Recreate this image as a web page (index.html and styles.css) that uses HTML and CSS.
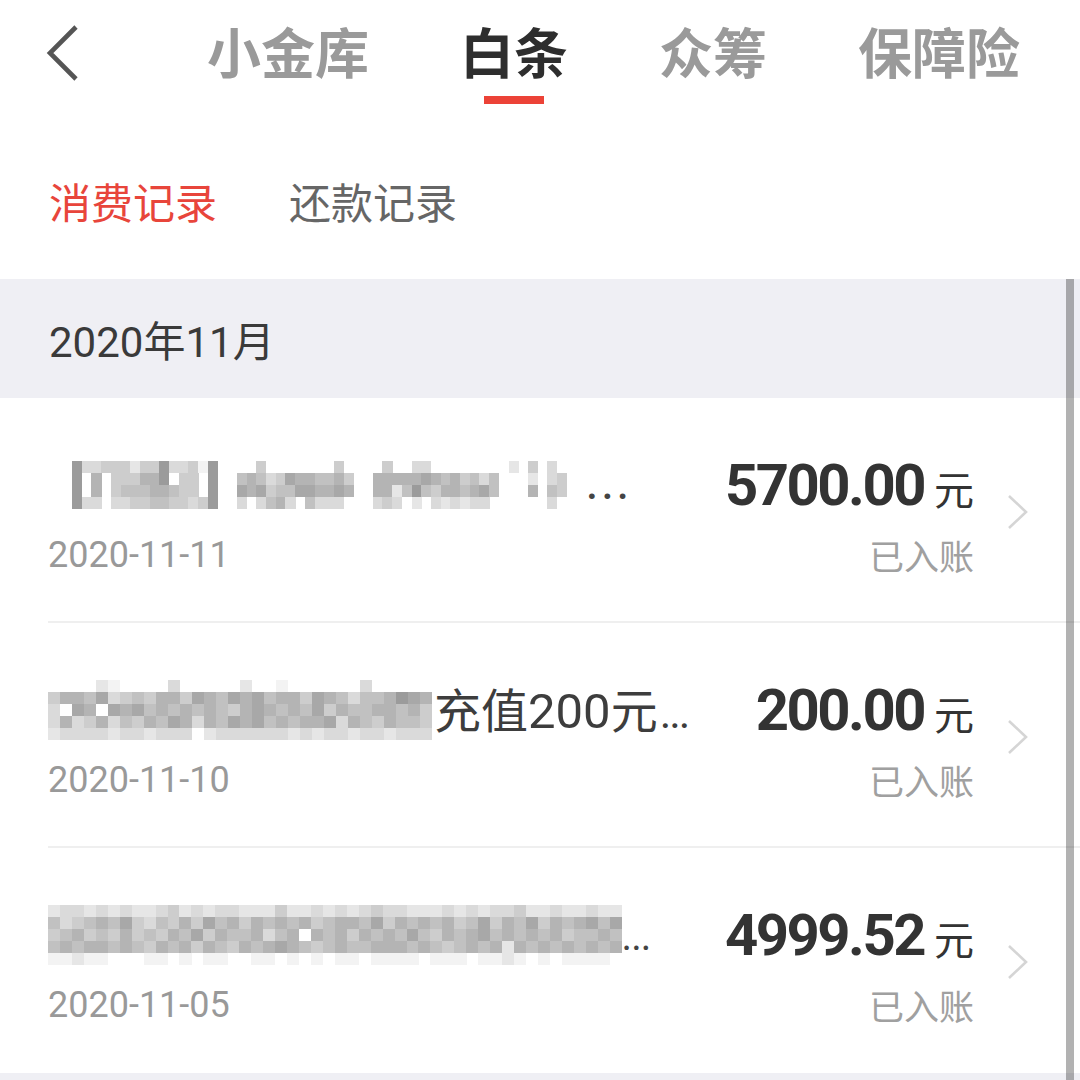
FILE: index.html
```html
<!DOCTYPE html>
<html lang="zh-CN">
<head>
<meta charset="utf-8">
<title>白条 消费记录</title>
<link rel="stylesheet" href="styles.css">
</head>
<body>
<div class="page">
  <header class="topbar">
    <svg class="back" width="36" height="58" viewBox="0 0 36 58"><path d="M31 3 L5 29 L31 55" fill="none" stroke="#555" stroke-width="4.6" stroke-linecap="butt" stroke-linejoin="miter"/></svg>
    <nav class="tabs">
      <div class="tab">小金库</div>
      <div class="tab active">白条<span class="bar"></span></div>
      <div class="tab">众筹</div>
      <div class="tab">保障险</div>
    </nav>
  </header>

  <div class="subtabs">
    <div class="subtab active">消费记录</div>
    <div class="subtab">还款记录</div>
  </div>

  <section class="list">
    <div class="month">2020年11月</div>

    <div class="row">
      <div class="left">
        <div class="title">
          <span class="mosaic m1" data-cw="9.7" data-ch="12" data-rows="833444244833418000040000000400004003300000000204030|806044466804408005653476655640066666765645350002034|806045556654408007674557766760066258546656750006054|833033445544348003035630533300034302032323300000030"></span>
          <span class="ell ell1">...</span>
        </div>
        <div class="date">2020-11-11</div>
      </div>
      <div class="right">
        <div class="amount"><span class="num">5700.00</span><span class="yuan">元</span></div>
        <div class="status">已入账</div>
      </div>
      <svg class="chev" width="22" height="36" viewBox="0 0 22 36"><path d="M2 2 L19 18 L2 34" fill="none" stroke="#d5d5d5" stroke-width="2.6"/></svg>
    </div>

    <div class="row">
      <div class="left">
        <div class="title">
          <span class="mosaic" data-cw="12" data-ch="12" data-rows="00002100003000002001000000300000|46657345466476576756647653556876|30760767565656546765657465566564|36346354657636576756566736546554|23333233233302333333232332332333"></span>
          <span class="txt">充值<span class="d">200</span>元<span class="d dots">...</span></span>
        </div>
        <div class="date">2020-11-10</div>
      </div>
      <div class="right">
        <div class="amount"><span class="num">200.00</span><span class="yuan">元</span></div>
        <div class="status">已入账</div>
      </div>
      <svg class="chev" width="22" height="36" viewBox="0 0 22 36"><path d="M2 2 L19 18 L2 34" fill="none" stroke="#d5d5d5" stroke-width="2.6"/></svg>
    </div>

    <div class="row last">
      <div class="left">
        <div class="title">
          <span class="mosaic" data-cw="11.95" data-ch="12" data-rows="233232322342323322242232323433222323233422322322|534565743546475646565645665746565645746574656757|456454645465746556356065646565754656756565645565|565665654656465465676545655666565456562656565656|112110001101011001101010110111101110112101011110"></span>
          <span class="ell">...</span>
        </div>
        <div class="date">2020-11-05</div>
      </div>
      <div class="right">
        <div class="amount"><span class="num">4999.52</span><span class="yuan">元</span></div>
        <div class="status">已入账</div>
      </div>
      <svg class="chev" width="22" height="36" viewBox="0 0 22 36"><path d="M2 2 L19 18 L2 34" fill="none" stroke="#d5d5d5" stroke-width="2.6"/></svg>
    </div>

    <div class="foot"></div>
    <div class="scrollbar"></div>
  </section>
</div>
<script src="script.js"></script>
</body>
</html>
```

FILE: styles.css
```css
html, body {
  margin: 0;
  padding: 0;
  background: #fff;
  overflow: hidden;
}
body {
  font-family: Roboto, "Noto Sans CJK SC", sans-serif;
  color: #333;
}
.page {
  width: 1080px;
  height: 1080px;
  overflow: hidden;
}

/* top bar */
.topbar {
  display: flex;
  align-items: flex-start;
  padding: 21px 0 0 45px;
}
.back {
  display: block;
  margin-top: 3px;
  flex: none;
}
.tabs {
  display: flex;
  gap: 91px;
  margin-left: 126px;
}
.tab {
  display: flex;
  flex-direction: column;
  align-items: center;
  font-family: "Noto Sans CJK SC", sans-serif;
  font-weight: 700;
  font-size: 54px;
  line-height: 60px;
  color: #9a9a9a;
}
.tab.active {
  color: #2e2e2e;
}
.bar {
  display: block;
  width: 60px;
  height: 8px;
  margin-top: 15px;
  background: #ec4237;
}

/* sub tabs */
.subtabs {
  display: flex;
  gap: 72px;
  padding: 72px 0 53px 49px;
}
.subtab {
  font-family: "Noto Sans CJK SC", sans-serif;
  font-size: 42px;
  line-height: 50px;
  color: #666;
}
.subtab.active {
  color: #e8453b;
}

/* list */
.list {
  position: relative;
}
.month {
  height: 119px;
  display: flex;
  align-items: center;
  padding-left: 49px;
  background: #efeff4;
  font-size: 42px;
  color: #3a3a3a;
}
.row {
  display: flex;
  align-items: center;
  margin-left: 48px;
  padding: 57px 51px 44px 0;
  border-bottom: 2px solid #efefef;
}
.row.last {
  border-bottom: 0;
  padding-bottom: 46px;
}
.left {
  flex: 1;
  min-width: 0;
  display: flex;
  flex-direction: column;
  gap: 18px;
}
.title {
  height: 60px;
  display: flex;
  align-items: center;
  font-size: 42px;
  color: #333;
  white-space: nowrap;
}
.mosaic {
  display: block;
  flex: none;
}
.mosaic svg {
  display: block;
}
.m1 {
  margin-left: 24px;
}
.ell {
  font-family: Roboto, sans-serif;
  font-size: 40px;
  line-height: 60px;
  color: #444;
  margin-top: 4px;
  letter-spacing: -1px;
}
.ell1 {
  margin-left: 20px;
  letter-spacing: 5px;
  font-weight: 700;
  font-size: 36px;
}
.txt {
  font-family: "Noto Sans CJK SC", sans-serif;
  font-size: 47px;
  line-height: 60px;
  color: #3d3d3d;
  margin-left: 2px;
}
.txt .d {
  font-family: Roboto, sans-serif;
  font-size: 49px;
}
.txt .dots {
  font-size: 44px;
  letter-spacing: -2px;
  margin-left: 2px;
}
.date {
  height: 44px;
  line-height: 44px;
  font-size: 36px;
  color: #999;
}
.right {
  display: flex;
  flex-direction: column;
  align-items: flex-end;
  gap: 18px;
}
.amount {
  height: 60px;
  display: flex;
  align-items: baseline;
  line-height: 60px;
}
.num {
  font-family: Roboto, sans-serif;
  font-weight: 700;
  font-size: 58px;
  letter-spacing: -2.5px;
  color: #333;
}
.yuan {
  font-family: "Noto Sans CJK SC", sans-serif;
  font-size: 40px;
  margin-left: 10px;
  color: #333;
}
.status {
  height: 44px;
  line-height: 44px;
  font-family: "Noto Sans CJK SC", sans-serif;
  font-size: 35px;
  color: #a0a0a0;
}
.chev {
  display: block;
  flex: none;
  margin-left: 33px;
  margin-bottom: 8px;
}
.foot {
  height: 7px;
  background: #efeff4;
}
.scrollbar {
  position: absolute;
  top: 0;
  bottom: 0;
  right: 6px;
  width: 8px;
  background: rgba(0, 0, 0, 0.3);
}
```

FILE: script.js
```js
(function () {
  var ns = 'http://www.w3.org/2000/svg';
  var els = document.querySelectorAll('.mosaic');
  for (var i = 0; i < els.length; i++) {
    var el = els[i];
    var cw = parseFloat(el.getAttribute('data-cw'));
    var ch = parseFloat(el.getAttribute('data-ch'));
    var rows = el.getAttribute('data-rows').split('|');
    var cols = 0;
    for (var r = 0; r < rows.length; r++) cols = Math.max(cols, rows[r].length);
    var svg = document.createElementNS(ns, 'svg');
    svg.setAttribute('width', (cols * cw).toFixed(1));
    svg.setAttribute('height', rows.length * ch);
    svg.setAttribute('shape-rendering', 'crispEdges');
    for (var y = 0; y < rows.length; y++) {
      var row = rows[y];
      for (var x = 0; x < row.length; x++) {
        var l = parseInt(row.charAt(x), 10);
        if (!l) continue;
        var g = Math.round(255 - l * 12.5);
        var rect = document.createElementNS(ns, 'rect');
        rect.setAttribute('x', (x * cw).toFixed(2));
        rect.setAttribute('y', y * ch);
        rect.setAttribute('width', (cw + 0.4).toFixed(2));
        rect.setAttribute('height', ch + 0.4);
        rect.setAttribute('fill', 'rgb(' + g + ',' + g + ',' + g + ')');
        svg.appendChild(rect);
      }
    }
    el.appendChild(svg);
  }
})();
```
